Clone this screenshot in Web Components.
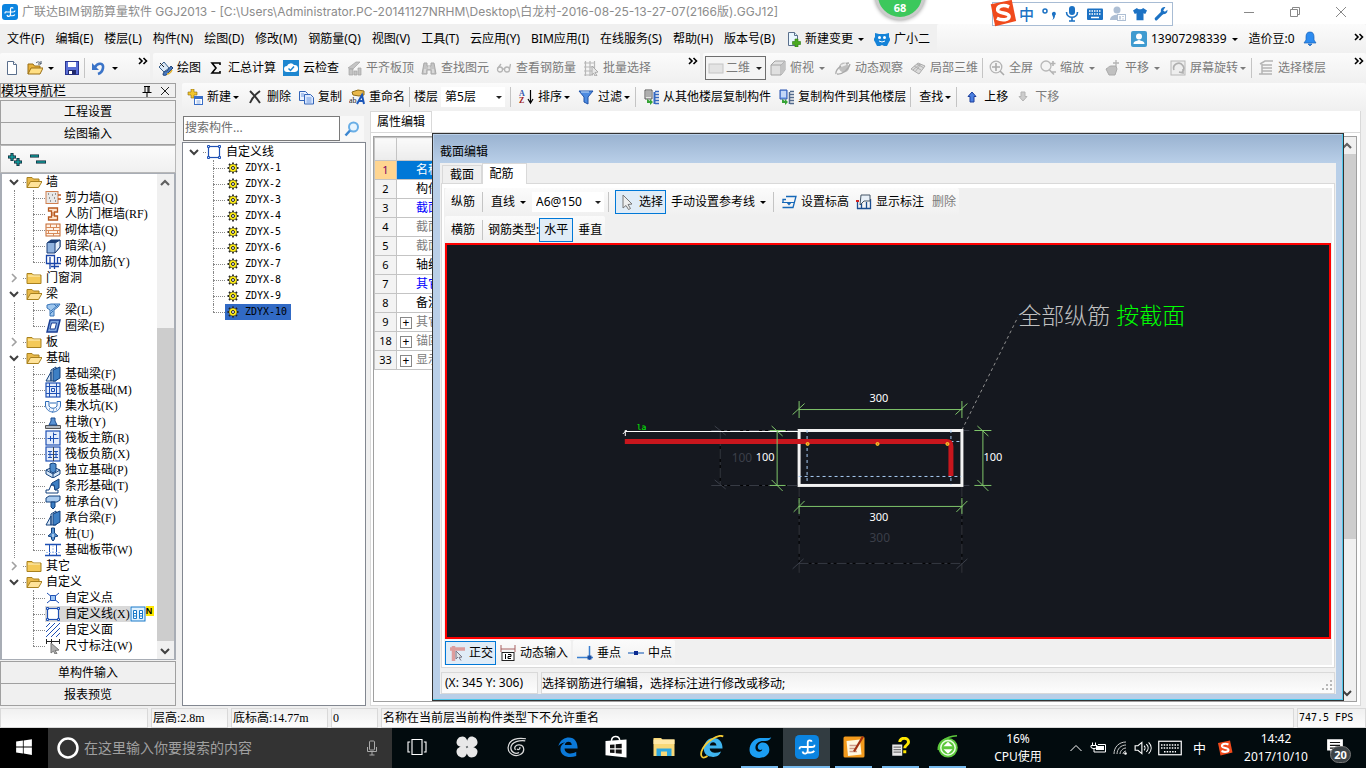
<!DOCTYPE html>
<html lang="zh-CN">
<head>
<meta charset="utf-8">
<title>广联达BIM钢筋算量软件 GGJ2013</title>
<style>
html,body{margin:0;height:100%}
body{font:12px/16px "Noto Sans","Noto Sans CJK SC",sans-serif;color:#000;background:#f0f0f0;overflow:hidden}
</style>
</head>
<body>
<app-shell></app-shell>
<script>
const UI='"Noto Sans","Noto Sans CJK SC",sans-serif';
const SONG='"Liberation Serif","Noto Sans CJK SC",serif';
const MONO='"DejaVu Sans Mono","Noto Sans CJK SC",monospace';
const page=(fold,back)=>`<path d="M3.500 1.500h6l3 3v10h-9z" fill="${back}" stroke="#5a6f8c"/><path d="M9.500 1.500v3h3" fill="${fold}" stroke="#5a6f8c"/>`;
const blueBox='<rect x="1" y="1" width="14" height="14" fill="#e4edfc" stroke="#1e50b4" stroke-width="1.200"/>';
const beam='<path d="M1 15l5-9v9zM6 15V4l5-3v14z" fill="#d9e8f8" stroke="#12407c"/><path d="M8 4l7-3v11l-5 3H8z" fill="#3d7fc4" stroke="#12407c"/>';
const ICONS={
logo:'<rect width="16" height="16" rx="3" fill="#0b84e0"/><path d="M8.500 10.500V5c0-2 2.500-1.500 2.500-.5M8.500 10c0 3-3 3-3.500 1M3 9.500c0-2 1-1.500 2-1.500h6c1.500 0 2 0 2-1.500M12.800 10.500c-.5 1-2 1.500-4.300 1" fill="none" stroke="#fff" stroke-width="1.200"/>',
newfile:page('#fff','#fff'),
newchange:page('#dff','#eaf7ff')+'<path d="M10 8h3v2.500h2.500v3H13V16h-3v-2.500H7.500v-3H10z" fill="#4aaa20" stroke="#2c7a10" stroke-width=".6"/>',
open:'<path d="M1 14V4h5l1.500 2H13v2" fill="#e8b23c" stroke="#9a6f14"/><path d="M1 14l3-6h12l-3 6z" fill="#ffdf84" stroke="#9a6f14"/><path d="M9 3c2-2 4-1 5 1M14 1v3h-3" fill="none" stroke="#456"/>',
save:'<rect x="1.500" y="1.500" width="13" height="13" fill="#5b6fd6" stroke="#2a3592"/><rect x="4" y="2" width="8" height="5" fill="#fff"/><rect x="4" y="10" width="8" height="4.500" fill="#222a6c"/><rect x="5" y="11" width="3" height="3" fill="#fff"/>',
undo:'<path d="M4 7c3-5 9-4 8 1-.5 3-2 5-5 6" fill="none" stroke="#3b74c8" stroke-width="2.600"/><path d="M1 3v7h7z" fill="#3b74c8"/>',
chev2:'<path d="M5 3l3 3-3 3M9.500 3l3 3-3 3" fill="none" stroke="#000" stroke-width="1.600"/>',
draw:'<path d="M2 7l5-5 5 6-5 4z" fill="#dbe8f5" stroke="#3a5f8a"/><path d="M3 3l4 4" stroke="#222"/><path d="M6 15c0-3 2-4 4-4l4-5 2 2-5 5c-1 2-3 3-5 2z" fill="#4879bf" stroke="#21457c"/><path d="M10 14c2 0 4-2 5-4" stroke="#e3b12b" stroke-width="1.500" fill="none"/>',
sigma:'<path d="M12 5V3H4l4 5-4 5h8v-2" fill="none" stroke="#000" stroke-width="1.600"/>',
cloud:'<rect width="16" height="16" fill="#1d86d0"/><path d="M4 12a3 3 0 010-6 4 4 0 017-1 3.500 3.500 0 011 7z" fill="#fff"/><path d="M5.500 8.500l2 2 3.500-4" fill="none" stroke="#1d86d0" stroke-width="1.500"/>',
align:'<path d="M2 8l8-6h4l-7 7zM3 15V9h4v6zM8 15v-4h3v4zM12 15V8h3v7z" fill="#c4c4c4" stroke="#a4a4a4" stroke-width=".7"/>',
find:'<path d="M3 3h3v3h4V3h3l2 11h-5v-4H6v4H1z" fill="#c4c4c4" stroke="#a8a8a8"/><path d="M4 9v4M12 9v4M8 6v3" stroke="#eee"/>',
glasses:'<circle cx="4" cy="9.500" r="2.500" fill="none" stroke="#b4b4b4" stroke-width="1.300"/><circle cx="11" cy="9.500" r="2.500" fill="none" stroke="#b4b4b4" stroke-width="1.300"/><path d="M6 9h2.500M2 8l3-4M13.500 9l1-5" stroke="#b4b4b4" stroke-width="1.300" fill="none"/>',
batch:'<path d="M1 3h11M1 7h11M1 11h9M1 15h9M2.500 1v15M7 1v15M11.500 1v9" stroke="#b8b8b8" stroke-width="1.200"/><path d="M9 6l6 6-3 .5 2 3-2 .5-1.500-3-1.500 2z" fill="#e8e8e8" stroke="#aaa"/>',
rect2d:'<rect x="1" y="4" width="14" height="9" fill="#e3e3e3" stroke="#c4c4c4"/>',
cube:'<path d="M1 5l4-4h10v9l-4 5H1z" fill="#e0e0e0" stroke="#a4a4a4"/><path d="M1 5h10v10M11 5l4-4" fill="none" stroke="#a4a4a4"/><path d="M11 5l4-4v9l-4 5z" fill="#c4c4c4"/>',
orbit:'<circle cx="9" cy="7.500" r="5" fill="#c0c0c0"/><path d="M1 14C0 9 9 3 14 3M2 14c5 1 12-5 13-10" fill="none" stroke="#aaa" stroke-width="1.300"/><path d="M6 6l5-2" stroke="#eee" stroke-width="2"/>',
part3d:'<path d="M1 9l7-6 7 3-6 8z" fill="#dcdcdc" stroke="#acacac"/><path d="M4 6l7 4M7 4l7 4M5 12l6-8M3 10l7-6" stroke="#b0b0b0"/>',
full:'<circle cx="7" cy="7" r="5.800" fill="#f4f4f4" stroke="#b4b4b4" stroke-width="1.300"/><path d="M7 3v8M3 7h8M11 11l4 4" stroke="#aaa" stroke-width="1.600"/>',
zoom:'<circle cx="6" cy="6" r="5" fill="#f4f4f4" stroke="#b8b8b8" stroke-width="1.300"/><path d="M9.500 10l4.500 4.500M13 1v5M10.500 3.500h5M12 12h4" stroke="#b4b4b4" stroke-width="1.600"/>',
pan:'<path d="M1 9c2-1 3-3 5-3h5l1 3-2 6H4z" fill="#c0c0c0" stroke="#aaa"/><path d="M11 0v6M8 3h6" stroke="#b4b4b4" stroke-width="1.300"/>',
rotate:'<rect x="1" y="1" width="14" height="14" fill="#eee" stroke="#b8b8b8"/><path d="M4 10a5 5 0 118 2M9 12l4 1V9" fill="none" stroke="#b0b0b0" stroke-width="1.600"/>',
floors:'<path d="M2 4l5-3h8M4 5h10M4 8h10M4 11h10M1 14h13M4 4v10" fill="none" stroke="#b4b4b4" stroke-width="1.500"/>',
add:'<path d="M4 0h3v3h3v3H7v3H4V6H1V3h3z" fill="#f2c62c" stroke="#8a6a10" stroke-width=".6"/><rect x="7.500" y="7.500" width="8" height="8" fill="#fff" stroke="#3a6fc8"/><path d="M8 9h7" stroke="#3a6fc8" stroke-width="2"/><path d="M9.500 12h4M9.500 14h4" stroke="#86a8e0"/>',
del:'<path d="M3 2c3 3 6 6 10 12M13 2C9 5 5 9 3 14" fill="none" stroke="#333" stroke-width="1.900"/>',
copy:'<path d="M1.500 2.500h6l2 2v7h-8z" fill="#eaf2ff" stroke="#3465b8"/><path d="M6.500 5.500h6l3 3v6.500h-9z" fill="#dce9ff" stroke="#3465b8"/><path d="M3 5h3M3 7h3M8.500 9h5M8.500 11h5M8.500 13h5" stroke="#6e98de"/>',
rename:'<path d="M3 3l6-2 6 1v4l-5 1-6-1z" fill="#e9b84a" stroke="#8e6c18"/><text x="0" y="14" font-family="Liberation Serif" font-size="8" fill="#222">ab</text><path d="M8 15l5-9 2 9M10 12h4" stroke="#1c56b8" stroke-width="2" fill="none"/>',
sort:'<text x="1" y="7" font-family="Liberation Serif" font-weight="700" font-size="8" fill="#3356b0">A</text><text x="1" y="14" font-family="Liberation Serif" font-weight="700" font-size="8" fill="#a02020">Z</text><path d="M12.500 1v12M10 10l2.500 4 2.500-4" fill="none" stroke="#000" stroke-width="1.200"/>',
filter:'<path d="M1 2h14L10 8v7l-4-2V8z" fill="#4d8be0" stroke="#1f52a8"/><path d="M3 3h8" stroke="#c5defa"/>',
copyfrom:'<path d="M2 1h7v9H2z" fill="#e6e6e6" stroke="#555"/><path d="M3 3h5M3 5h5M3 7h5" stroke="#777"/><path d="M11.500 3v12" stroke="#3569c0" stroke-width="2"/><path d="M12 2.500h4M12 5.500h4M12 8.500h4M12 11.500h4M12 14.500h4" stroke="#3569c0" stroke-width="1.500"/><path d="M4 10v4h3v2l3-3-3-3v2" fill="#36a336"/>',
copyto:'<path d="M2 1h7v9H2z" fill="#87aef0" stroke="#2a55b0"/><path d="M3 3h5M3 5h5M3 7h5" stroke="#fff"/><path d="M11.500 3v12" stroke="#526a8c" stroke-width="1.500"/><path d="M12 2.500h4M12 5.500h4M12 8.500h4M12 11.500h4M12 14.500h4" stroke="#526a8c" stroke-width="1.500"/><path d="M4 10v4h3v2l3-3-3-3v2" fill="#36a336"/>',
up:'<path d="M8 3l4 4.500h-2V13H6V7.500H4z" fill="#4a7fe0" stroke="#1c3f9c"/>',
down:'<path d="M8 12L4 7.500h2V3h4v4.500h2z" fill="#ccc" stroke="#b4b4b4"/>',
mascot:'<path d="M1 2l4 1h6l4-1v4c1.500 2 1.500 3 0 5l-2 4h-3l-2-1-2 1H3l-2-4c-1.500-2-1.500-3 0-5z" fill="#1583d8"/><circle cx="5.500" cy="6.500" r="1.500" fill="#fff"/><circle cx="10.500" cy="6.500" r="1.500" fill="#fff"/><path d="M5 10q3 2 6 0" stroke="#fff" fill="none"/>',
user:'<rect width="16" height="16" rx="2" fill="#3f9bd0"/><circle cx="8" cy="5.500" r="3" fill="#fff"/><path d="M2.500 13c0-3 3-3 5.500-4 2.500 1 5.500 1 5.500 4z" fill="#fff"/>',
bell:'<path d="M8 1c3 0 4 2 4 5v3l2 3H2l2-3V6c0-3 1-5 4-5zM6 13h4l-2 2z" fill="#2d8cf0" stroke="#1b63b8" stroke-width=".7"/>',
pin:'<path d="M5 3.500h6M6 3v6M10 3v6M9 3v6M3.500 9.500h9M8 10v4" stroke="#000"/>',
close:'<path d="M4 4l8 8M12 4l-8 8" stroke="#222" fill="none"/>',
pluses:'<path d="M5 2v8M1 6h8M11 7v8M7 11h8" stroke="#012" stroke-width="3"/><path d="M5 2.500v7M1.500 6h7M11 7.500v7M7.500 11h7" stroke="#16a0a0" stroke-width="1.400"/>',
minuses:'<path d="M0 5h9M6 11h10" stroke="#012" stroke-width="3"/><path d="M.5 5h8M6.500 11h9" stroke="#16a0a0" stroke-width="1.400"/>',
folder:'<path d="M1 13.500v-10h5l1.500 1.500H15v8.500z" fill="#f4c958" stroke="#a8811f"/><path d="M2 6h12" stroke="#fff2c2"/>',
folderopen:'<path d="M1 13.500v-10h5l1.500 1.500H13v3" fill="#e9b94a" stroke="#a8811f"/><path d="M1 13.500l3.500-6H16l-3.500 6z" fill="#ffe39a" stroke="#a8811f"/>',
shear:'<rect x="1" y="1.500" width="12" height="12" fill="#e8e8e8" stroke="#d08050"/><path d="M3 4h1M7 5h1M4 8h1M9 8h1M5 11h1M10 11h1M10 4h1" stroke="#444"/><path d="M13 5h3M13 9h3" stroke="#c05a20" stroke-width="1.500"/>',
gatewall:'<path d="M3.500 2h9v4h-3v4h3v4h-9v-3h3V5h-3z" fill="#ffe6cf" stroke="#b85a20" stroke-width="1.300"/><path d="M7 7h3M7 9h3" stroke="#b85a20"/>',
brick:'<rect x="1" y="2" width="14" height="12" fill="#fff3e8" stroke="#c4672c"/><path d="M1 5.500h14M1 8.500h14M1 11.500h14M5.500 2v3M11.500 2v3M8.500 5v3M3.500 8v3M12.500 8v3M8.500 11v3" stroke="#d88a58"/>',
hidden:'<path d="M2 5l4-3h9v7l-5 6H2z" fill="#8fb2de" stroke="#1b3f78"/><path d="M10 5l5-3v7l-5 6z" fill="#e2ecf8" stroke="#1b3f78"/><path d="M2 5l4-3h9l-5 3z" fill="#1b3f78"/>',
masonrybar:'<path d="M1.500 1.500h8v8h-8zM5 15V3M9.500 15V5M1 9.500h15M12.500 3v6M6 12.500h8" fill="none" stroke="#1844a8" stroke-width="1.300"/><path d="M12 3.500h3.500v4" fill="none" stroke="#1844a8"/>',
beamL:'<path d="M2 3l4-1h9l-2 3-4 3v6H5V8L2 6z" fill="#9fc7ee" stroke="#3874b8"/><path d="M6 9l7-6M5 12l3-3M9 2l3 3" stroke="#3874b8"/>',
ring:'<path d="M5 2h10l-3 12H2z" fill="#7ea7e0" stroke="#1b3f94" stroke-width="1.500"/><path d="M6.500 5h5l-1.500 6H5z" fill="#fff" stroke="#1b3f94"/>',
beamF:beam, strip:'<path d="M1 15v-3h3l2-5h3l1 5h3v3z" fill="#fff" stroke="#12407c"/><path d="M7 5l7-4v9l-4 2-1-5H6z" fill="#3d7fc4" stroke="#12407c"/>',
raft:blueBox+'<path d="M4.500 1v14M11.500 1v14M1 4.500h14M1 11.500h14M6.500 6.500h3v3h-3z" fill="none" stroke="#1e50b4"/>',
pit:'<path d="M.5 3.500H4V8c2 3 6 3 8 0V3.500h3.500V8c-2 8-13 8-15 0z" fill="#eef5ff" stroke="#2f6cb8"/><path d="M4 11h1M8 12h1M11 11h1M7 14h1M5 5h6" stroke="#2f6cb8"/>',
pier:'<path d="M.5 11.500h15v3H.5z" fill="#b4bac2" stroke="#555"/><path d="M6 4h4v3l2 4H4l2-4z" fill="#5b93d4" stroke="#1c4d90"/>',
rebar1:blueBox+'<path d="M8.500 2.500v11M2.500 8.500h11M5.500 6v5M8 4.500h3.500" stroke="#1e50b4"/>',
rebar2:blueBox+'<path d="M3 5.500h4M9 5.500h4M3 11.500h4M9 11.500h4M5 5v6M11 5v6M3 8.500h10" stroke="#1e50b4"/><path d="M8.500 1v14" stroke="#444"/>',
isolated:'<path d="M1 8l7-3 7 3v4l-7 4-7-4z" fill="#d5e6f7" stroke="#12407c"/><path d="M5 2l3-1 3 1v7l-3 2-3-2z" fill="#4e8ccc" stroke="#12407c"/><path d="M1 8l7 4 7-4M8 12v4" fill="none" stroke="#12407c"/>',
cap:'<path d="M1 4l3-2h11v4l-3 2H1z" fill="#a9cbef" stroke="#12407c"/><path d="M6 8h4v5l-2 2-2-2z" fill="#3d7fc4" stroke="#12407c"/>',
pile:'<path d="M6.500 2h3v5l3.500 3-3.500 1v2L8 15l-1.500-2v-2L3 10l3.500-3z" fill="#5592d2" stroke="#12407c"/><path d="M7.500 8h1v3h-1z" fill="#fff"/>',
band:'<path d="M0 2.500h16M0 13.500h16" stroke="#1e50b4" stroke-width="1.500"/><path d="M4.500 3v10M11.500 3v10" stroke="#1e50b4"/><path d="M8 3v10M1 10.500h14" stroke="#aac4ee" stroke-dasharray="2 1"/>',
pt:'<path d="M2 3l12 10M14 3L2 13" stroke="#1e50b4"/><path d="M5.500 5.500h5v5h-5z" fill="#9cc4f4" stroke="#1e50b4"/>',
line:'<rect x="2.500" y="2.500" width="11" height="11" fill="#fff" stroke="#1e50b4" stroke-width="1.200"/><path d="M1.500 1.500h2v2h-2zM12.500 1.500h2v2h-2zM1.500 12.500h2v2h-2zM12.500 12.500h2v2h-2z" fill="#cfe0fb" stroke="#1e50b4"/>',
face:'<path d="M1 5l4-4M1 10l9-9M1 15L15 1M6 15l9-9M11 15l4-4" stroke="#1e50b4"/>',
dim:'<path d="M1.500 1v5M14.500 1v5M6.500 1v5M1 3.500h14" stroke="#222"/><path d="M6 5l8 7-4 .5 2 3-2 .5-1.500-3L6 15z" fill="#b0b0b0" stroke="#777"/>',
gear:'<path d="M8 2.500v11M2.500 8h11M4 4l8 8M12 4l-8 8" stroke="#222" stroke-width="1.800"/><circle cx="8" cy="8" r="4" fill="#ffee10" stroke="#444" stroke-width=".6"/><circle cx="8" cy="8" r="1.500" fill="#fff" stroke="#222"/>',
tbl:'<rect x="1" y="1" width="14" height="14" fill="#dff1ff" stroke="#1878c8"/><path d="M3.500 4.500h3v8h-3zM9.500 4.500h3v8h-3zM3.500 7.500h3M3.500 10h3M9.500 7.500h3M9.500 10h3" fill="#fff" stroke="#1878c8"/>',
lens:'<circle cx="9.500" cy="6" r="4.500" fill="#e8f5ff" stroke="#69aee6" stroke-width="2"/><path d="M6 9.500L1.500 14.500" stroke="#3b86d0" stroke-width="2.500"/>',
cursor:'<path d="M4 1l9 9-4 .5 2.500 4-2 1L7 11.500 4 14z" fill="#eee" stroke="#777"/>',
level:'<path d="M5 2.500h10l-3 11H1.500M2 8V5.500h3" fill="none" stroke="#1668b8" stroke-width="1.300"/><path d="M1 8.500h12" stroke="#1668b8"/><path d="M5 8h6l-3 3.500z" fill="#1668b8"/>',
showdim:'<path d="M1.500 6v9M14.500 5v10M1 14.500h14M5.500 8v7M10.500 8v7" stroke="#1b4d90" stroke-width="1.300"/><path d="M5 1h9v6H8l-4 4z" fill="#e8f0f8" stroke="#456"/><path d="M0 7h3" stroke="#d02020" stroke-width="2"/>',
ortho:'<path d="M1 4h15M4.500 1v15" stroke="#dd9d9d" stroke-width="3.500"/><path d="M7 6l6 6-3 .5 2 3M7 6v8l2-2" fill="#ddd" stroke="#778"/>',
dyn:'<path d="M1 0v7M15 0v7M1 4h14" stroke="#a86060"/><rect x="2" y="7.500" width="12" height="8" fill="#fff" stroke="#222"/><path d="M5.500 9v5M8 9.500h3v2H8v2h3" stroke="#000" fill="none"/>',
perp:'<path d="M0 12.500h16M12.500 1v14" stroke="#3b7fd0" stroke-width="1.500" fill="none"/><path d="M10.500 10.500h4v4h-4z" fill="#1b4da0"/>',
mid:'<path d="M0 8h16" stroke="#3b74c0" stroke-width="1.300"/><rect x="6" y="6" width="4" height="4" fill="#0c2a90"/>',
win:'<path d="M1 3.200l6-.9v5.300H1zM7.700 2.200L15 1v6.600H7.700zM1 8.400h6v5.300l-6-.9zM7.700 8.400H15V15l-7.300-1.200z" fill="#fff"/>',
ring2:'<circle cx="8" cy="8" r="6.300" fill="none" stroke="#fff" stroke-width="1.700"/>',
mic:'<rect x="5.500" y="1" width="5" height="9" rx="1" fill="none" stroke="#aaa"/><path d="M3.500 7v4.500h9V7M8 12v3M5.500 15h5" fill="none" stroke="#aaa"/>',
taskview:'<path d="M4 2h8v12H4zM2.500 4H.8v8h1.700M13.500 4h1.700v8h-1.700" fill="none" stroke="#fff" stroke-width=".9"/>',
swirl:'<g fill="#e8e8e8"><path d="M8 7.500C6 9 1 8 1 5c0-2 1.500-4 4-4s4 3 3 6.500z"/><path d="M8.500 8C7 6 8 1 11 1c2 0 4 1.500 4 4s-3 4-6.500 3z"/><path d="M8 8.500C10 7 15 8 15 11c0 2-1.500 4-4 4s-4-3-3-6.500z"/><path d="M7.500 8C9 10 8 15 5 15c-2 0-4-1.500-4-4s3-4 6.500-3z"/></g>',
spiral:'<path d="M14.500 2C9 1 2 2 1.500 8.500c0 4.500 5 7 9 5 3.500-2 3-6.500-.5-7-3-.5-4.500 2-3 3.500M14 3.500C10 3 4 4 3.500 8.500c0 3.500 3.500 5 6 3.500M8 9.500c1 1 2.500 0 2-1.500" fill="none" stroke="#ddd" stroke-width=".9"/>',
edge:'<path d="M1 7.500C2 2.500 6 1 8.500 1c4.500 0 6.500 3.500 6.500 8H5.500c.2 4 5 4.500 8.500 2.500v3C9 16.500 2.500 15 2.500 9.500c0-2.500 1.500-4 3.500-5-3 .5-4.500 2-5 3zM5.700 6.600h5c0-3.200-4.600-3.200-5 0z" fill="#0b79d8"/>',
store:'<path d="M1 4l14-1v12L1 13.500z" fill="#fff"/><path d="M5 4c0-4 5-4 5.500-.5" fill="none" stroke="#fff"/><path d="M4 6.500l3-.2v2.500H4zM7.800 6.200l4-.3v2.900h-4zM4 9.600h3V12l-3-.2zM7.800 9.600h4v2.900l-4-.4z" fill="#111"/>',
explorer:'<path d="M1 3V2h5l1 1h8v11H1z" fill="#f8d877"/><path d="M1 3h14v3H1z" fill="#ffe9a8"/><path d="M3 14V9h10v5h-3v-3H6v3z" fill="#2da7e0"/>',
ie:'<path d="M2.500 9C3 4 6 2 9 2c4 0 6 3 6 7H6.500c.2 3 4 3.500 7.500 2-1 3-4 4-6 3.500C5 14.500 2.500 12.500 2.500 9zM6.500 7h4.500c-.3-3-4.200-3-4.500 0z" fill="#3fb4ee"/><path d="M15.500 1C12-1 3 5 1 11c-1 4 1 5 4 3" fill="none" stroke="#f4cb35" stroke-width="1.200"/>',
gld:'<path d="M15.500 1.500c-3 1.500-9-1-12 2.500C.5 7 .5 11 2 13c2 3 9 3 11 0 2-2 1.500-6-1-7.500-2.500-1.300-5.500 0-5.500 2.500 0 2 2 2.500 3 1.500 0 2-4 2.500-4.500-.5C4.500 5.500 8 3.500 11 4c2 .2 4-.8 4.500-2.500z" fill="#1b9df2"/>',
note:'<rect x="1" y="1" width="14" height="14" rx="1" fill="#f29a1c"/><path d="M3 4l9-1 1 10-9 1z" fill="#fff8e0"/><path d="M5 7h5M5 9h4M5 11h5" stroke="#c98"/><path d="M14 1L8 11" stroke="#a03010" stroke-width="1.500"/>',
help:'<path d="M1 6h8v9H1z" fill="#e8e8e8"/><path d="M2 8h6M2 10h6M2 12h6" stroke="#777"/><path d="M7 4c0-4 7-4 7 0 0 3-3 2-3 5M11 10.500v2.500" stroke="#ffe800" stroke-width="2.400" fill="none"/>',
browser:'<circle cx="8" cy="8.500" r="6.500" fill="#5cc83c"/><circle cx="8" cy="8.500" r="4.800" fill="none" stroke="#e8ffe0"/><path d="M5 7.500l3-3 3 3zM5 9.500l3 3 3-3z" fill="#fff"/><path d="M14 .5C6 1 1 5 1.500 10" fill="none" stroke="#5cc83c"/>',
trayup:'<path d="M2.500 11L8 5.500l5.500 5.500" fill="none" stroke="#fff"/>',
batt:'<rect x="6" y="6" width="8" height="4" fill="#fff"/><path d="M2.500 2.500v3M5.500 2.500v3M1 5.500h6v2l-2 1H3l-2-1zM4 8v4h11.500V4.500H8" fill="none" stroke="#fff"/>',
wifi:'<path d="M2 14C2 7 7 2 14 2M5 14c0-5 4-9 9-9M8 14c0-3 3-6 6-6M11 14c0-1.500 1.500-3 3-3" fill="none" stroke="#ccc"/><circle cx="13.500" cy="13.500" r="1.300" fill="#fff"/>',
vol:'<path d="M1 6h2.500L7 3v10l-3.500-3H1zM9 6c1 1 1 3 0 4M11 4.500c2 2 2 5 0 7M13 3c3 3 3 7 0 10" fill="none" stroke="#fff"/>',
kbd:'<rect x=".5" y="3.500" width="15" height="9" fill="none" stroke="#fff" stroke-width=".8"/><path d="M2 6h12M2 8h12M4 10.500h8" stroke="#fff" stroke-dasharray="1 .8" stroke-width=".9"/>',
sogou:'<path d="M1 3l12-2.500 2.500 12L3.500 15.500z" fill="#f04a1c"/><path d="M11.500 4.500C8 3 4.500 4 5 6.500c.5 2 6.500 1 6.500 3.500 0 2-4 2.500-7 1" fill="none" stroke="#fff" stroke-width="2"/>',
action:'<path d="M1 1h14v10H7l-3 3v-3H1z" fill="#fff"/><path d="M3.500 4h9M3.500 6.500h9M3.500 9h6" stroke="#111"/>',
imic:'<rect x="5" y="0" width="6" height="9" rx="3" fill="#1c72c4"/><path d="M2.500 6c0 7 11 7 11 0M8 12v3M5 15h6" fill="none" stroke="#1c72c4" stroke-width="1.600"/>',
ikbd:'<rect x="0" y="2.500" width="16" height="11.500" rx="1" fill="#1c72c4"/><path d="M2 5h12M2 8h12" stroke="#fff" stroke-width="1.500" stroke-dasharray="1.500 1"/><path d="M4 11.500h8" stroke="#fff" stroke-width="1.500"/>',
iuser:'<circle cx="7" cy="4" r="3.500" fill="#aebfd4"/><path d="M0 14c0-7 14-7 14 0z" fill="#aebfd4"/><rect x="7.500" y="8.500" width="8" height="6" fill="#fff" stroke="#aebfd4"/><path d="M10 10v3.500M13 10v1M13 12.500v1" stroke="#8fa4c0"/>',
shirt:'<path d="M4.500 1c1 2 6 2 7 0L16 4l-2 4-2-1v8H4V7L2 8 0 4z" fill="#1c72c4"/>',
wrench:'<path d="M2.500 13.500L9 7" stroke="#1c72c4" stroke-width="3.500" stroke-linecap="round"/><path d="M13 0C9-.5 7 3 8 6s5 3 7 0l.5-3-3 2.500-2-1.500z" fill="#1c72c4"/>',
punct:'<circle cx="4" cy="5" r="2" fill="none" stroke="#1c72c4" stroke-width="1.500"/><path d="M11 8.500a2 2 0 113 1c0 2-1 4-3 4.500 1-1 1.500-2 1-3z" fill="#1c72c4"/>',
min:'<path d="M3 8.500h10" stroke="#888"/>',
restore:'<path d="M3.500 5.500h7v7h-7zM5.500 5.500v-2h7v7h-2" fill="none" stroke="#888"/>',
xwin:'<path d="M3 3l10 10M13 3L3 13" stroke="#888" fill="none"/>',
caret:'<path d="M5 7h6l-3 3z" fill="currentColor"/>',
cdown:'<path d="M4 6l4 4 4-4" fill="none" stroke="#404040" stroke-width="2"/>',
cup:'<path d="M4 10l4-4 4 4" fill="none" stroke="#606060" stroke-width="2.200"/>',
cright:'<path d="M6 4l4 4-4 4" fill="none" stroke="#a0a0a0" stroke-width="1.600"/>',
grip:'<path d="M12 3h2v2h-2zM8 7h2v2H8zM12 7h2v2h-2zM4 11h2v2H4zM8 11h2v2H8zM12 11h2v2h-2z" fill="#b8b8b8"/>'
};
class Base extends HTMLElement{
  connectedCallback(){
    if(this.shadowRoot)return;
    const t=document.createElement('template');
    t.innerHTML='<style>*{box-sizing:border-box}button,input,select{font:inherit;color:inherit;margin:0;border:0;padding:0;background:none;border-radius:0;outline:0}'+this.css()+'</style>'+this.html();
    this.attachShadow({mode:'open'}).append(t.content.cloneNode(true));
  }
  a(n){return this.getAttribute(n)||''}
  has(n){return this.hasAttribute(n)}
}
const def=(n,css,html)=>customElements.define(n,class extends Base{css(){return typeof css==='function'?css(this):css}html(){return html(this)}});

def('ui-icon',e=>`:host{display:block;flex:none;width:${e.a('size')||16}px;height:${e.a('size')||16}px}svg{display:block;width:100%;height:100%}`,
 e=>`<svg viewBox="0 0 16 16" aria-hidden="true">${ICONS[e.a('name')]||''}</svg>`);

def('tool-item',`:host{display:block;flex:none}button{display:flex;align-items:center;gap:4px;height:24px;padding:0 3px 0 4px;white-space:nowrap}
:host(:not([icon])) button{padding-left:5px}
button:disabled{color:#7b7b7b}:host([active]) button{border:1px solid #0078d7;background:#e0ecf7;padding:0 2px 0 3px}:host([active]:not([icon])) button{padding:0 4px}
.car{width:12px;overflow:hidden;margin:0 0 0 -2px}.car ui-icon{margin-left:-2px}
:host([tight]) .car{width:11px;margin:0 -1px 0 -5px}`,
 e=>`<button type="button" ${e.has('disabled')?'disabled':''} ${e.a('icon')&&!e.textContent?`aria-label="${e.a('icon')}"`:''}>${e.a('icon')?`<ui-icon name="${e.a('icon')}"></ui-icon>`:''}${e.textContent?'<span><slot></slot></span>':''}${e.has('caret')?'<span class="car"><ui-icon name="caret"></ui-icon></span>':''}</button>`);

def('tool-sep',':host{display:block;flex:none;width:1px;height:20px;background:#c4c4c4;margin:0 3px 0 1px}:host([flush]){margin-right:0}',()=>'');

def('drop-select',e=>`:host{display:grid;flex:none;align-items:center;width:${e.a('w')}px;height:${e.has('boxed')?24:20}px;background:${e.has('boxed')?'#f4f4f4':'#fff'};${e.has('boxed')?'border:1px solid #6e6e6e;':''}color:${e.has('boxed')?'#7b7b7b':'#000'}}
select{grid-area:1/1;appearance:none;width:100%;height:100%;padding-left:${e.has('boxed')?20:4}px}ui-icon{grid-area:1/1;pointer-events:none}.i{justify-self:start;margin-left:2px}.c{justify-self:end;color:#222;margin-right:-2px}`,
 e=>`<select aria-label="${e.a('label')}"><option>${e.a('value')}</option></select>${e.a('icon')?`<ui-icon class="i" name="${e.a('icon')}"></ui-icon>`:''}<ui-icon class="c" name="caret"></ui-icon>`);

def('tool-strip',':host{display:flex;align-items:center;min-width:0;background:linear-gradient(#fbfbfb,#f0f0f0);border-radius:2px}',()=>'<slot></slot>');

def('title-bar',`:host{display:flex;align-items:center;height:24px;background:#fff;padding:0 3px 0 2px;gap:4px;color:#8c8c8c}
h1{margin:0;font:12px/16px Inter,"Noto Sans CJK SC",sans-serif;flex:1;white-space:nowrap}.b{display:flex;gap:30px;padding-right:14px;align-items:center}button{height:16px}`,
 ()=>`<ui-icon name="logo"></ui-icon><h1>广联达BIM钢筋算量软件 GGJ2013 - [C:\\Users\\Administrator.PC-20141127NRHM\\Desktop\\白龙村-2016-08-25-13-27-07(2166版).GGJ12]</h1>
 <div class="b"><button aria-label="最小化"><ui-icon name="min"></ui-icon></button><button aria-label="还原"><ui-icon name="restore"></ui-icon></button><button aria-label="关闭"><ui-icon name="xwin"></ui-icon></button></div>`);

def('menu-bar',`:host{display:flex;align-items:center;height:29px;background:#f0f0f0}
nav{display:flex;padding-left:2px}nav button{padding:0 6px 0 5px;white-space:nowrap;height:24px}
.l{display:flex;align-items:center;padding-right:4px}tool-strip{height:29px}.f{flex:1}.acc{width:240px;padding-left:1px}.e{margin-left:auto}`,
 ()=>`<div class="l"><nav>${'文件(F) 编辑(E) 楼层(L) 构件(N) 绘图(D) 修改(M) 钢筋量(Q) 视图(V) 工具(T) 云应用(Y) BIM应用(I) 在线服务(S) 帮助(H) 版本号(B)'.split(' ').map(t=>`<button type="button">${t}</button>`).join('')}</nav>
 <tool-item icon="newchange" caret>新建变更</tool-item><tool-item icon="mascot">广小二</tool-item></div>
 <tool-strip class="f"></tool-strip><tool-strip class="acc"><tool-item icon="user" caret>13907298339</tool-item><tool-item>造价豆:0</tool-item><tool-item icon="bell"></tool-item><ui-icon class="e" name="chev2"></ui-icon></tool-strip>`);

def('main-toolbar',`:host{display:flex;height:30px;gap:3px}tool-strip{height:30px}.x{align-self:flex-start;margin-top:2px}
.a{width:150px}.b{width:547px}.c{flex:1;padding-left:2px}.e{margin-left:auto}tool-sep{margin:0 2px 0 1px}`,
 ()=>`<tool-strip class="a"><tool-item icon="newfile"></tool-item><tool-item icon="open" caret></tool-item><tool-item icon="save"></tool-item><tool-sep></tool-sep><tool-item icon="undo" caret></tool-item><ui-icon class="x e" name="chev2"></ui-icon></tool-strip>
 <tool-strip class="b"><tool-item icon="draw">绘图</tool-item><tool-item icon="sigma">汇总计算</tool-item><tool-item icon="cloud">云检查</tool-item><tool-item disabled icon="align">平齐板顶</tool-item><tool-item disabled icon="find">查找图元</tool-item><tool-item disabled icon="glasses">查看钢筋量</tool-item><tool-item disabled icon="batch">批量选择</tool-item><ui-icon class="x e" name="chev2"></ui-icon></tool-strip>
 <tool-strip class="c"><drop-select boxed w="61" icon="rect2d" label="视图模式" value="二维"></drop-select><tool-item disabled caret icon="cube">俯视</tool-item><tool-item disabled icon="orbit">动态观察</tool-item><tool-item disabled icon="part3d">局部三维</tool-item><tool-sep></tool-sep><tool-item disabled icon="full">全屏</tool-item><tool-item disabled caret icon="zoom">缩放</tool-item><tool-item disabled caret icon="pan">平移</tool-item><tool-item disabled tight caret icon="rotate">屏幕旋转</tool-item><tool-sep></tool-sep><tool-item disabled icon="floors">选择楼层</tool-item><ui-icon class="x e" name="chev2"></ui-icon></tool-strip>`);

def('part-toolbar',`:host{display:block}tool-strip{height:27px;padding-left:1px}.g{width:4px}.k{margin-left:-4px}`,
 ()=>`<tool-strip><tool-item icon="add" tight caret>新建</tool-item><tool-item icon="del">删除</tool-item><tool-item icon="copy">复制</tool-item><tool-item icon="rename">重命名</tool-item><tool-sep></tool-sep><tool-item class="k">楼层</tool-item><drop-select w="64" label="楼层" value="第5层"></drop-select><span class="g"></span><tool-sep></tool-sep><tool-item icon="sort" tight caret>排序</tool-item><tool-item icon="filter" tight caret>过滤</tool-item><tool-sep></tool-sep><tool-item icon="copyfrom">从其他楼层复制构件</tool-item><tool-item icon="copyto">复制构件到其他楼层</tool-item><tool-sep></tool-sep><tool-item tight caret>查找</tool-item><tool-sep></tool-sep><tool-item icon="up">上移</tool-item><tool-item icon="down" disabled>下移</tool-item></tool-strip>`);

def('scroll-bar',e=>`:host{display:flex;flex-direction:column;width:17px;flex:none;background:#f0f0f0}button{height:17px;flex:none;width:17px}.t{flex:${e.a('thumb')} 0 0;background:#cdcdcd}.p{flex:${e.a('before')} 0 0}.n{flex:${e.a('after')} 0 0}`,
 ()=>`<button aria-label="向上滚动"><ui-icon name="cup"></ui-icon></button><div class="p"></div><div class="t"></div><div class="n"></div><button aria-label="向下滚动"><ui-icon name="cdown"></ui-icon></button>`);

def('tree-row',e=>`:host{display:flex;align-items:center;height:16px;white-space:nowrap;font:12px/16px ${e.has('mono')?MONO:SONG}}
.ch{width:20px;flex:none;padding-left:3px}.st{width:3px;border-top:1px dotted #888}
.g0{width:19px;margin-left:11px;height:16px;flex:none;border-left:1px dotted ${e.has('noroot')?'transparent':'#888'}}
.g1{width:12px;flex:none;height:16px;display:flex}.g1 i{width:12px;border-left:1px dotted #888;height:${e.has('last')?'8px':'16px'}}.g1 b{margin:8px 0 0 -12px;width:12px;height:1px;border-top:1px dotted #888}
.n{display:flex;align-items:center;gap:4px;height:16px;padding-right:${e.has('mono')?4:0}px;background:${e.a('sel')||'none'}}${e.has('mono')?'.n span{font-size:10px}':''}`,
 e=>(e.has('group')?`<span class="ch"><ui-icon name="${e.has('open')?'cdown':'cright'}"></ui-icon></span><span class="st"></span>`
  :'<span class="g0"></span><span class="g1"><i></i><b></b></span>')+`<span class="n"><ui-icon name="${e.a('icon')}"></ui-icon><span><slot></slot></span></span><slot name="extra"></slot>`);

const TREE=[['墙','o'],['剪力墙(Q)','shear'],['人防门框墙(RF)','gatewall'],['砌体墙(Q)','brick'],['暗梁(A)','hidden'],['砌体加筋(Y)','masonrybar',1],['门窗洞','c'],['梁','o'],['梁(L)','beamL'],['圈梁(E)','ring',1],['板','c'],['基础','o'],['基础梁(F)','beamF'],['筏板基础(M)','raft'],['集水坑(K)','pit'],['柱墩(Y)','pier'],['筏板主筋(R)','rebar1'],['筏板负筋(X)','rebar2'],['独立基础(P)','isolated'],['条形基础(T)','strip'],['桩承台(V)','cap'],['承台梁(F)','beamF'],['桩(U)','pile'],['基础板带(W)','band',1],['其它','c'],['自定义','o'],['自定义点','pt'],['自定义线(X)','line'],['自定义面','face'],['尺寸标注(W)','dim',1]];
def('nav-panel',`:host{display:flex;flex-direction:column;width:176px;flex:none;font-size:12px}
header{display:flex;align-items:center;height:15px;border:1px solid #a0a0a0;font-size:13px;line-height:13px;margin-bottom:2px;white-space:nowrap}header span{flex:1}header ui-icon{margin-right:2px}header button{height:16px}
.s{height:22px;flex:none;border:1px solid #a0a0a0;border-bottom-width:0;background:#f0f0f0;line-height:20px}
.s.z{border-bottom-width:1px;height:23px}
.tools{display:flex;gap:7px;height:28px;flex:none;border:1px solid #b8b8b8;align-items:center;padding-left:6px;background:linear-gradient(#fbfbfb,#f0f0f0)}
.tree{display:flex;flex:1;min-height:0;border:2px solid #a8adb5;border-width:1px 2px;background:#fff;margin-bottom:1px}
.rows{flex:1;min-width:0;padding:0 0 0 1px;overflow:hidden}.rows tree-row{min-width:0}.ex{display:flex;font:700 9px/10px "Liberation Sans",sans-serif}.ex b{background:#ffe600;height:10px;width:8px}`,
 ()=>{let last=false;return `<header><span>模块导航栏</span><button aria-label="固定"><ui-icon name="pin"></ui-icon></button><button aria-label="关闭"><ui-icon name="close"></ui-icon></button></header>
 <button class="s" type="button">工程设置</button><button class="s z" type="button">绘图输入</button>
 <div class="tools"><ui-icon name="pluses"></ui-icon><ui-icon name="minuses"></ui-icon></div>
 <div class="tree"><div class="rows">${TREE.map(([t,k,l])=>{
   if(k=='o'||k=='c'){last=t=='自定义';return `<tree-row group ${k=='o'?'open':''} icon="${k=='o'?'folderopen':'folder'}">${t}</tree-row>`}
   return `<tree-row icon="${k}" ${l?'last':''} ${last?'noroot':''} ${k=='line'?'sel="#d9d9d9"':''}>${t}${k=='line'?'<span slot="extra" class="ex"><ui-icon name="tbl"></ui-icon><b>N</b></span>':''}</tree-row>`}).join('')}</div>
 <scroll-bar before="137" thumb="313" after="1"></scroll-bar></div>
 <button class="s" type="button">单构件输入</button><button class="s z" type="button">报表预览</button>`});

def('part-list',`:host{display:flex;flex-direction:column;width:184px;flex:none;margin-top:5px}
.q{display:flex;height:27px;flex:none;padding:1px 0 1px 1px}input{width:157px;height:25px;border:1px solid #7a7a7a;background:#fff;padding:0 1px 2px}input::placeholder{color:#6d6d6d;opacity:1}.q button{width:24px;padding-left:4px;background:#f8f8f8}
.t{flex:1;min-height:0;background:#fff;border:1px solid #828790;padding-top:1px}`,
 ()=>`<div class="q"><input type="search" aria-label="搜索构件" placeholder="搜索构件..."><button aria-label="搜索"><ui-icon name="lens"></ui-icon></button></div>
 <div class="t"><tree-row group open icon="line">自定义线</tree-row>${[1,2,3,4,5,6,7,8,9,10].map(n=>`<tree-row mono noroot icon="gear" ${n==10?'last sel="#316ac5"':''}>ZDYX-${n}</tree-row>`).join('')}</div>`);

const PROPS=[[1,'名称','s'],[2,'构件'],[3,'截面','b'],[4,'截面','g'],[5,'截面','g'],[6,'轴线'],[7,'其它','b'],[8,'备注'],[9,'其它','g+'],[18,'锚固','g+'],[33,'显示','g+']];
def('prop-pane',`:host{display:flex;flex-direction:column;flex:1;min-width:0;position:relative;margin:1px 5px 0 0}
.tabs{height:21px;flex:none;background:#fff;border-right:1px solid #d9d9d9}.tabs button{width:62px;height:21px;background:#fff;border:1px solid #d9d9d9;border-bottom:0;line-height:18px}
.box{flex:1;display:flex;min-height:0;border:1px solid #d9d9d9;padding:3px 3px 3px 2px;background:#fff}.in{flex:1;display:flex;min-width:0;border:1px solid #a0a0a0;background:#fff}
.g{flex:1;min-width:0}table{border-collapse:collapse;table-layout:fixed;width:100%}th,td{height:19px;padding:0;border:1px solid #c4c4c4;font-weight:400;line-height:16px;overflow:hidden;white-space:nowrap;text-align:left}
thead th{height:23px;background:linear-gradient(#fafafa,#ececec)}col.n{width:22px}tbody th{background:#f3f3f3;text-align:center;font:11px/16px ${UI}}
tbody td{padding-left:19px}.s th{background:#ffd590;color:#800060}.s td{background:#0078d7;color:#fff}.b td{color:#00f}.y td{color:#808080}.p td{padding-left:3px}.p td span{display:inline-block;width:12px;height:12px;border:1px solid #888;line-height:10px;text-align:center;color:#000;margin-right:4px;vertical-align:middle}
section-dialog{position:absolute;left:62px;right:17px;top:22px;bottom:5px}`,
 ()=>`<div class="tabs"><button type="button">属性编辑</button></div><div class="box"><div class="in"><div class="g"><table><colgroup><col class="n"><col></colgroup><thead><tr><th></th><th></th></tr></thead><tbody>${PROPS.map(([n,t,k=''])=>`<tr class="${k=='s'?'s':k=='b'?'b':k[0]=='g'?'y':''} ${k[1]?'p':''}"><th scope="row">${n}</th><td>${k[1]?'<span>+</span>':''}${t}</td></tr>`).join('')}</tbody></table></div><scroll-bar before="0" thumb="384" after="145"></scroll-bar></div></div>
 <section-dialog></section-dialog>`);

def('section-dialog',`:host{display:flex;flex-direction:column;border:1px solid #333;background:#b9cfe8;padding:1px 7px 6px;box-shadow:inset -1px -1px #4fc8ec}
h2{margin:0 -6px;padding:7px 6px 0;font-size:12px;font-weight:400;line-height:20px;height:28px;flex:none;background:linear-gradient(#9ab3d1,#b9cfe8)}
.body{flex:1;min-height:0;display:flex;flex-direction:column;background:#f0f0f0;padding:0 1px}
.tabs{display:flex;align-items:flex-end;height:21px;flex:none;margin-bottom:-1px;z-index:1;padding-left:1px}.tabs button{height:19px;width:40px;border:1px solid #d9d9d9;background:#f0f0f0;line-height:18px}.tabs button.on{height:21px;width:45px;background:#fff;border-bottom:0;padding-right:6px}
.pg{flex:1;min-height:0;border:1px solid #d9d9d9;background:#fff;padding:4px 2px 2px}.pi{height:100%;background:#f0f0f0;display:flex;flex-direction:column}
.r{display:flex;flex:none;padding-left:1px;gap:2px}.r tool-strip{height:27px;padding-left:1px}.r1 tool-strip{height:28px}.r3 tool-strip{height:25px;padding-left:0}
.stat{display:flex;gap:3px;height:22px;flex:none;margin-top:4px}.stat div{border:1px solid #d9d9d9;background:linear-gradient(#f0f0f0,#fdfdfd);line-height:19px;white-space:nowrap}.c1{width:97px;padding-left:3px}.c2{flex:1;display:flex;align-items:flex-end;justify-content:space-between}.c2 span{align-self:center}.sp{width:3px}`,
 ()=>`<h2>截面编辑</h2><div class="body"><div class="tabs"><button type="button">截面</button><button type="button" class="on">配筋</button></div><div class="pg"><div class="pi">
 <div class="r r1"><tool-strip><tool-item>纵筋</tool-item><span class="sp"></span><tool-sep></tool-sep><tool-item caret>直线</tool-item><drop-select w="72" label="钢筋规格" value="A6@150"></drop-select><span class="sp"></span><tool-sep></tool-sep><span class="sp"></span><tool-item active icon="cursor">选择</tool-item><tool-item caret>手动设置参考线</tool-item><tool-sep></tool-sep><tool-item icon="level">设置标高</tool-item><tool-item icon="showdim">显示标注</tool-item><tool-item disabled>删除</tool-item></tool-strip></div>
 <div class="r"><tool-strip><tool-item>横筋</tool-item><span class="sp"></span><tool-sep flush></tool-sep><tool-item style="margin-right:-3px">钢筋类型:</tool-item><tool-item active>水平</tool-item><tool-item>垂直</tool-item></tool-strip></div>
 <section-canvas></section-canvas>
 <div class="r r3"><tool-strip><tool-item active icon="ortho">正交</tool-item><tool-item icon="dyn">动态输入</tool-item></tool-strip><tool-strip><tool-item icon="perp">垂点</tool-item><tool-item icon="mid">中点</tool-item></tool-strip></div>
 </div></div><div class="stat"><div class="c1">(X: 345 Y: 306)</div><div class="c2"><span>选择钢筋进行编辑，选择标注进行修改或移动;</span><ui-icon name="grip"></ui-icon></div></div></div>`);

def('section-canvas',`:host{display:block;flex:1;min-height:0;border:2px solid #f00;background:#15181f;margin:0 1px 1px}svg{display:block;width:100%;height:100%}text{font:11px ${UI};fill:#fff}.big{font-size:23px;font-weight:300}`,
 ()=>`<svg viewBox="447 245 883 392" role="img" aria-label="配筋截面图">
 <g fill="none" stroke="#000"><path d="M711.500 430.500H799M711.500 485.500H799M720.500 430V486M799.500 487v86M962.500 487v86M799 563.500H963"/></g>
 <g fill="none" stroke="#3b3f49" stroke-dasharray="10 3 3 3"><path d="M711.500 430.500H799M711.500 485.500H799M720.500 430V486M799.500 487v86M962.500 487v86M799 563.500H963"/></g>
 <path d="M715 426l11 9M715 480l11 9M793 569l11-10M957 569l11-10M964 430.500h6M964 485.500h6" stroke="#3b3f49"/>
 <path d="M962.500 430L1018.500 317" stroke="#909090" stroke-dasharray="3 3" fill="none"/>
 <rect x="799.500" y="430.500" width="163" height="55" fill="none" stroke="#f3f3f3" stroke-width="3"/>
 <path d="M807.500 430v54M951.500 430v55M799 476.500h163M951 441.500h11" stroke="#a9cdf5" stroke-dasharray="3 3" fill="none"/>
 <path d="M625 431.500H799M623 434l4-4M625.500 430v6" stroke="#fff"/>
 <path d="M625 441.500H947q4.500 0 4.500 5V476" fill="none" stroke="#c8161d" stroke-width="5"/>
 <g fill="none" stroke="#7fc66a"><path d="M799 409.500H963M799.500 401v17M962.500 401v17M793 414.500l12-11M956 414.500l12-11M799 506.500H963M799.500 498v16M962.500 498v16M794 512l11-11M957 512l11-11M777.500 430v56M770 430.500h16M770 485.500h16M772 426l11 10M772 480l11 11M983.500 430v56M975 430.500h17M975 485.500h17M978 426l11 10M978 480l11 11"/></g>
 <g fill="#e8761a" stroke="#ffd82a"><circle cx="808" cy="444" r="1.500"/><circle cx="878" cy="444" r="1.500"/><circle cx="948" cy="444" r="1.500"/></g>
 <text x="870" y="402">300</text><text x="870" y="521">300</text><text x="870" y="542" style="fill:#3b3f49;font-size:12px">300</text>
 <text x="756" y="461">100</text><text x="984" y="461">100</text><text x="732" y="462" style="fill:#3b3f49;font-size:12px">100</text>
 <text x="637" y="430" style="fill:#0f0;font:8px 'DejaVu Sans Mono',monospace">la</text>
 <text class="big" x="1019" y="324" style="fill:#c0c0c0">全部纵筋</text><text class="big" x="1117" y="324" style="fill:#0f0">按截面</text></svg>`);

def('status-bar',`:host{display:flex;gap:3px;height:20px;flex:none;margin-top:2px;font:12px/18px ${SONG}}div{border:1px solid #d9d9d9;background:linear-gradient(#f0f0f0,#fdfdfd);white-space:nowrap;padding-left:1px}.m{font:10px/18px ${MONO}}.w{flex:1;font:12px/18px ${UI}}`,
 ()=>`<div style="width:148px"></div><div style="width:77px">层高:2.8m</div><div style="width:97px">底标高:14.77m</div><div style="width:47px">0</div><div class="w">名称在当前层当前构件类型下不允许重名</div><div class="m" style="width:69px">747.5 FPS</div>`);

def('task-bar',`:host{display:flex;height:40px;flex:none;background:#020b0e;color:#fff;align-items:center}
button{height:40px;display:grid;place-items:center;flex:none;border-bottom:2px solid transparent}.st{width:48px;background:#000}
label{display:flex;align-items:center;gap:4px;width:344px;height:40px;background:#333;padding:0 12px 0 8px}input{flex:1;min-width:0;font-size:14px}input::placeholder{color:#a0a0a0;opacity:1}
.a{display:flex;margin-right:2px}.a button{width:50px}.b{display:flex}.b button{width:48px}.c{display:flex}.c button{width:47px;position:relative}.c button::after{content:"";position:absolute;left:5px;right:5px;bottom:-2px;height:2px;background:#76b9ed}.c .on{background:#323c41}.c .on::after{left:0;right:0}
.cpu{text-align:center;line-height:18px;margin-left:22px;width:50px;white-space:nowrap}.tray{display:flex;align-items:center;margin-left:auto}.tray ui-icon{margin:0 3px}.clk{text-align:center;line-height:18px;width:68px;white-space:nowrap;margin-left:6px}.im{margin:0 8px;font-size:13px}
.act{width:56px;position:relative;padding-right:6px}.act b{position:absolute;left:20px;top:18px;font:700 11px/15px ${UI};background:#3c4347;border:1px solid #777;border-radius:9px;width:21px;height:17px}`,
 ()=>{const b=(n,l,s=24,c='')=>`<button class="${c}" type="button" aria-label="${l}"><ui-icon name="${n}" size="${s}"></ui-icon></button>`;
 return `<button class="st" aria-label="开始"><ui-icon name="win" size="18"></ui-icon></button><label><ui-icon name="ring2" size="24"></ui-icon><input type="text" aria-label="搜索" placeholder="在这里输入你要搜索的内容"><ui-icon name="mic"></ui-icon></label>
 <div class="a">${b('taskview','任务视图',20)+b('swirl','应用',24)+b('spiral','应用',22)}</div><div class="b">${b('edge','Edge',22)+b('store','应用商店')+b('explorer','文件管理器')+b('ie','Internet Explorer')}</div><div class="c">${b('gld','广联达')+b('logo','钢筋算量',24,'on')+b('note','记事')+b('help','帮助',20)+b('browser','浏览器')}</div>
 <div class="cpu">16%<br>CPU使用</div><div class="tray"><ui-icon name="trayup"></ui-icon><ui-icon name="batt"></ui-icon><ui-icon name="wifi"></ui-icon><ui-icon name="vol" size="18"></ui-icon><ui-icon name="kbd" size="24"></ui-icon><span class="im">中</span><ui-icon name="sogou"></ui-icon><div class="clk">14:42<br>2017/10/10</div><button class="act" aria-label="操作中心"><ui-icon name="action" size="18"></ui-icon><b>20</b></button></div>`});

def('ime-bar',`:host{display:flex;align-items:center;gap:7px;height:24px;background:#fff;border:1px solid #a8bcd4;padding:0 4px 0 26px;color:#1c72c4}.s{position:absolute;left:-4px;top:-4px}b{font-size:15px;font-weight:500;line-height:20px}`,
 ()=>`<ui-icon class="s" name="sogou" size="28"></ui-icon><b>中</b><ui-icon name="punct"></ui-icon><ui-icon name="imic"></ui-icon><ui-icon name="ikbd"></ui-icon><ui-icon name="iuser"></ui-icon><ui-icon name="shirt" size="14"></ui-icon><ui-icon name="wrench" size="14"></ui-icon>`);

def('speed-ball',`:host{display:flex;align-items:flex-end;justify-content:center;width:50px;height:50px;border-radius:50%;background:#3cc85c;border:3px solid #ccc;box-shadow:0 0 4px #888;color:#fff;font:700 11px/12px ${UI};padding-bottom:3px;box-sizing:border-box}`,()=>'<slot></slot>');

def('app-shell',`:host{display:flex;flex-direction:column;height:100vh;min-height:768px;position:relative;overflow:hidden;font:12px/16px ${UI}}
.m{flex:1;display:flex;min-height:0;gap:6px}.r{flex:1;min-width:0;display:flex;flex-direction:column}.w{flex:1;display:flex;gap:4px;min-height:0}
ime-bar{position:absolute;top:2px;right:193px}speed-ball{position:absolute;left:875px;top:-30px}title-bar,menu-bar,main-toolbar{flex:none}`,
 ()=>`<title-bar></title-bar><menu-bar></menu-bar><main-toolbar></main-toolbar>
 <div class="m"><nav-panel></nav-panel><div class="r"><part-toolbar></part-toolbar><div class="w"><part-list></part-list><prop-pane></prop-pane></div></div></div>
 <status-bar></status-bar><task-bar></task-bar><ime-bar></ime-bar><speed-ball>68</speed-ball>`);
</script>
</body>
</html>
